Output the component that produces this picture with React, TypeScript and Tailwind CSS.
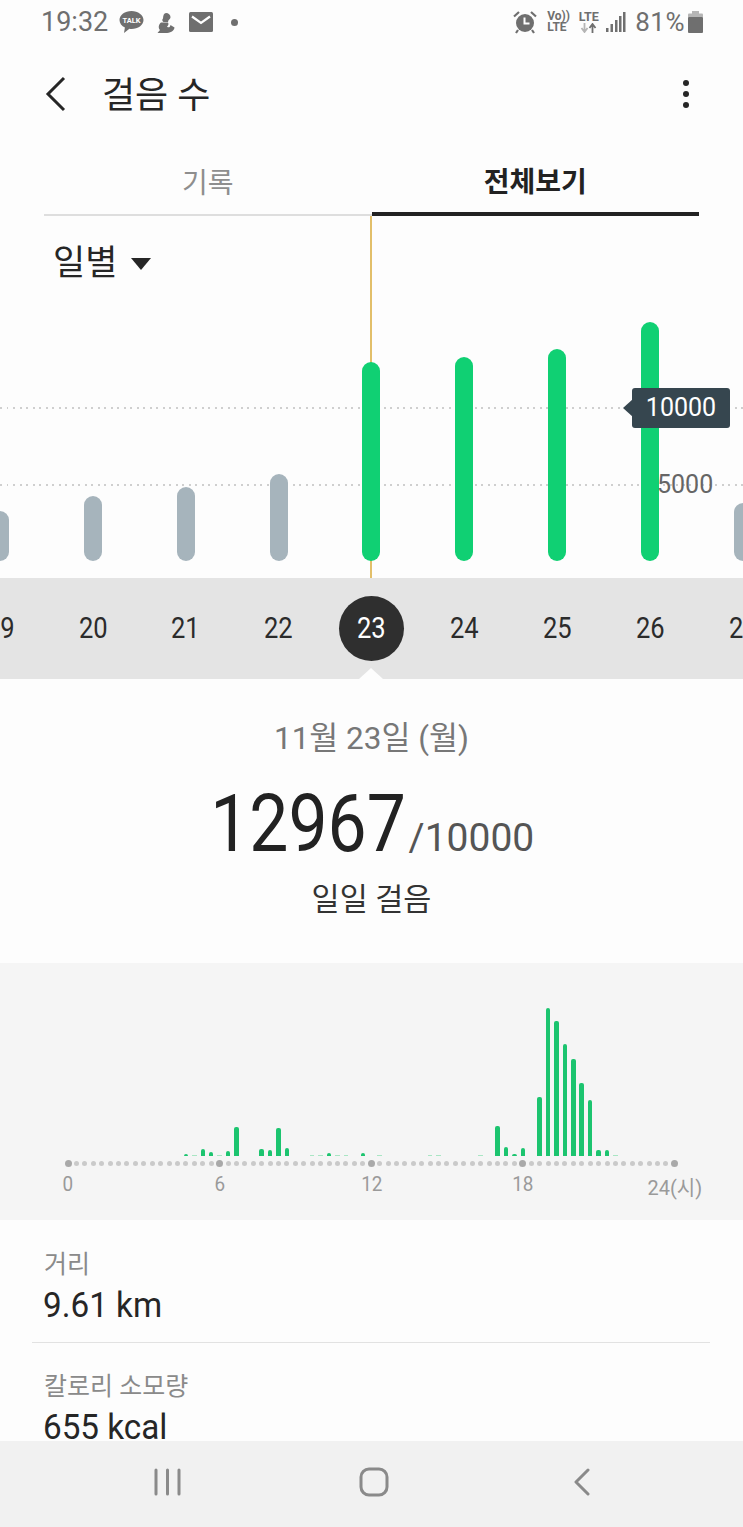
const days = [
  { label: "19", height: 50, active: false },
  { label: "20", height: 65, active: false },
  { label: "21", height: 74, active: false },
  { label: "22", height: 87, active: false },
  { label: "23", height: 199, active: true },
  { label: "24", height: 204, active: true },
  { label: "25", height: 212, active: true },
  { label: "26", height: 239, active: true },
  { label: "27", height: 58, active: false },
];

// bar height per 20 minute slot, 0.5 means a faint tick
const hourly: Record<number, number> = {
  14: 2, 15: 0.5, 16: 7, 17: 4, 18: 0.5, 19: 5, 20: 29, 23: 7, 24: 6, 25: 28, 26: 8,
  29: 0.5, 30: 0.5, 31: 3, 32: 0.5, 33: 0.5, 35: 3, 37: 0.5, 43: 0.5, 44: 0.5, 49: 0.5,
  51: 30, 52: 9, 53: 2, 54: 8, 56: 59, 57: 148, 58: 135, 59: 112, 60: 97, 61: 73, 62: 56,
  63: 6, 64: 6, 65: 0.5,
};
const slots = Array.from({ length: 73 }, (_, i) => i);

const font = "font-['Roboto','Noto_Sans_CJK_KR',sans-serif]";
const dotted = "bg-[repeating-linear-gradient(90deg,#cfcfcf_0_2px,transparent_2px_6.5px)]";

function StatusBar() {
  return (
    <div className="flex h-[44px] shrink-0 items-center pl-[41px] pr-[40px] text-[#6f6f6f]">
      <span className="text-[27px] leading-none">19:32</span>
      <svg className="ml-[11px]" width="25" height="24" viewBox="0 0 25 24">
        <path d="M12.500 1C6 1 .5 4.900.5 10c0 3.200 2.200 6 5.400 7.600L5 23l5.400-4.200c.7.100 1.400.200 2.100.200 6.500 0 12-4 12-9s-5.500-9-12-9z" fill="#6f6f6f" />
        <text x="12.500" y="13" textAnchor="middle" fontSize="7.500" fontWeight="700" fill="#fff" fontFamily="Roboto">TALK</text>
      </svg>
      <svg className="ml-[12px]" width="20" height="21" viewBox="0 0 20 21" fill="#6f6f6f">
        <path d="M10 1c2.500 0 4.500 1.800 4.500 4 0 1.400-.8 2.300-2 3.200L12 10H7.500C6 9 6 7.500 7 6.500 7.200 3.200 8 1 10 1z" />
        <path d="M5 10.500h7c1 1.800.3 3-1 4 1.500 1.500 3 1 3.500-1.500l4 2.500c-.6 4-4.500 5.500-9 5.500H1.500l2.500-3c-2-2-1.500-5.500 1-7.500z" />
      </svg>
      <svg className="ml-[13px]" width="24" height="20" viewBox="0 0 24 20">
        <rect width="24" height="20" rx="1.500" fill="#6f6f6f" />
        <path d="M3 4.500l9 6.500 9-6.500" stroke="#fff" strokeWidth="2.200" fill="none" />
      </svg>
      <span className="ml-[18px] size-[7px] rounded-full bg-[#6f6f6f]" />

      <svg className="ml-auto" width="24" height="24" viewBox="0 0 24 24" fill="#6f6f6f">
        <circle cx="12" cy="13" r="9" />
        <path d="M11.500 7.500v6h5" stroke="#fff" strokeWidth="2" fill="none" />
        <path d="M1 6.500L6 2M23 6.500L18 2M5 20l-2 3M19 20l2 3" stroke="#6f6f6f" strokeWidth="2.200" />
      </svg>
      <div className="ml-[10px] flex w-[23px] flex-col text-[12px] font-bold leading-[11px]">
        <span>Vo))</span>
        <span>LTE</span>
      </div>
      <div className="ml-[7px] flex w-[23px] flex-col items-center text-[12.500px] font-bold leading-[12px]">
        <span>LTE</span>
        <svg width="17" height="10" viewBox="0 0 17 10">
          <path d="M4.500 0v8M1.500 5l3 4 3-4" stroke="#b5b5b5" strokeWidth="1.800" fill="none" />
          <path d="M12.500 10V2M9.500 5l3-4 3 4" stroke="#6f6f6f" strokeWidth="1.800" fill="none" />
        </svg>
      </div>
      <svg className="ml-[6px]" width="20" height="22" viewBox="0 0 20 22" fill="#6f6f6f">
        <rect x="0" y="17" width="2.500" height="4" />
        <rect x="4.500" y="13" width="2.500" height="8" />
        <rect x="9" y="9" width="2.500" height="12" />
        <rect x="13" y="5" width="2.500" height="16" />
        <rect x="17" y="1" width="2.500" height="20" />
      </svg>
      <span className="ml-[9px] text-[26px] leading-none tracking-[0.5px]">81%</span>
      <svg className="ml-[3px]" width="15" height="22" viewBox="0 0 15 22">
        <path d="M4 0h7v3H4z" fill="#b5b5b5" />
        <rect y="2.500" width="15" height="4" rx="1" fill="#b5b5b5" />
        <rect y="6" width="15" height="16" rx="1" fill="#6f6f6f" />
      </svg>
    </div>
  );
}

function Header() {
  return (
    <div className="flex h-[100px] shrink-0 items-center pl-[45px] pr-[54px]">
      <svg width="22" height="36" viewBox="0 0 22 36" fill="none">
        <path d="M19 2L3 18l16 16" stroke="#262626" strokeWidth="3" />
      </svg>
      <h1 className="ml-[35px] mt-[3px] text-[36px] leading-none text-[#262626]">걸음 수</h1>
      <div className="ml-auto flex flex-col gap-[5px]">
        <span className="size-[6px] rounded-full bg-[#262626]" />
        <span className="size-[6px] rounded-full bg-[#262626]" />
        <span className="size-[6px] rounded-full bg-[#262626]" />
      </div>
    </div>
  );
}

function Tabs() {
  return (
    <div className="flex h-[72px] shrink-0 px-[44px] text-[28px] leading-none">
      <div className="flex flex-1 items-center justify-center border-b-2 border-[#dedede] pt-[10px] text-[#8e8e8e]">기록</div>
      <div className="flex flex-1 items-center justify-center border-b-4 border-[#222] pt-[10px] font-bold text-[#222]">전체보기</div>
    </div>
  );
}

function DailyChart() {
  return (
    <div className="relative flex h-[362px] shrink-0 flex-col overflow-hidden">
      <div className={`absolute inset-x-0 top-[191px] h-[2px] ${dotted}`} />
      <div className={`absolute inset-x-0 top-[268px] h-[2px] ${dotted}`} />
      <div className="absolute bottom-0 left-[370px] top-0 w-[2px] bg-[#e2bf6a]" />

      <div className="flex items-center pl-[53px] pt-[27px]">
        <span className="text-[35px] leading-[42px] text-[#262626]">일별</span>
        <span className="ml-[14px] h-0 w-0 border-x-[10px] border-t-[12px] border-x-transparent border-t-[#262626]" />
      </div>

      <div className="relative ml-[-46.500px] mt-auto flex items-end pb-[17px]">
        {days.map((d) => (
          <div key={d.label} className="flex w-[92.875px] shrink-0 justify-center">
            <div
              className={d.active ? "w-[18px] rounded-full bg-[#10d073]" : "w-[18px] rounded-full bg-[#a6b4bc]"}
              style={{ height: d.height }}
            />
          </div>
        ))}
      </div>

      <span className="absolute left-[657px] top-[254px] text-[25px] leading-[30px] text-[#666]">5000</span>
      <div className="absolute left-[632px] top-[172px] flex h-[40px] w-[98px] items-center justify-center rounded-[3px] bg-[#36464f] text-[25px] text-[#fff]">
        10000
        <span className="absolute left-[-9px] top-[11px] h-0 w-0 border-y-[9px] border-r-[10px] border-y-transparent border-r-[#36464f]" />
      </div>
    </div>
  );
}

function DateStrip() {
  return (
    <div className="relative ml-[-46.500px] flex h-[101px] w-[836px] shrink-0 items-center bg-[#e4e4e4]">
      {days.map((d) => (
        <div key={d.label} className="flex w-[92.875px] shrink-0 justify-center">
          {d.label === "23" ? (
            <span className="flex size-[65px] items-center justify-center rounded-full bg-[#2f2f2f] text-[#fff]">
              <span className="scale-x-[0.88] text-[29px]">23</span>
            </span>
          ) : (
            <span className="scale-x-[0.88] text-[29px] text-[#2b2b2b]">{d.label}</span>
          )}
        </div>
      ))}
      <span className="absolute bottom-0 left-[405.500px] h-0 w-0 border-x-[12px] border-b-[11px] border-x-transparent border-b-[#fdfdfd]" />
    </div>
  );
}

function Summary() {
  return (
    <div className="flex h-[284px] shrink-0 flex-col items-center">
      <p className="mt-[38px] text-[31.500px] leading-[44px] text-[#777]">11월 23일 (월)</p>
      <p className="mt-[24px] flex h-[78px] items-baseline leading-[78px] text-[#222]">
        <span className="ml-[-28px] origin-right scale-x-[0.87] text-[80px]">12967</span>
        <span className="ml-[3px] text-[39px] text-[#555]">/10000</span>
      </p>
      <p className="mt-[15px] text-[30.500px] leading-[44px] text-[#333]">일일 걸음</p>
    </div>
  );
}

function HourlyChart() {
  return (
    <div className="flex h-[257px] shrink-0 flex-col bg-[#f5f5f5]">
      <div className="mt-[40px] flex h-[153px] items-end pl-[63.800px]">
        {slots.map((i) => (
          <div key={i} className="flex w-[8.430px] shrink-0 justify-center">
            {hourly[i] && (
              <div
                className={hourly[i] < 1 ? "w-[4.500px] bg-[#a9e6c4]" : "w-[4.500px] rounded-t-[2px] bg-[#1cc46f]"}
                style={{ height: hourly[i] < 1 ? 1 : hourly[i] }}
              />
            )}
          </div>
        ))}
      </div>
      <div className="mt-[4px] flex h-[6px] items-center pl-[63.800px]">
        {slots.map((i) => (
          <div key={i} className="flex w-[8.430px] shrink-0 justify-center">
            <span className={i % 18 === 0 ? "size-[7px] shrink-0 rounded-full bg-[#a9a9a9]" : "size-[5px] shrink-0 rounded-full bg-[#cacaca]"} />
          </div>
        ))}
      </div>
      <div className="ml-[-8px] mt-[5px] flex text-[21px] leading-[26px] text-[#9a9a9a]">
        {["0", "6", "12", "18"].map((t) => (
          <span key={t} className="w-[151.750px] shrink-0 scale-x-[0.9] text-center">{t}</span>
        ))}
        <span className="mt-[4px] w-[151.750px] shrink-0 scale-x-[0.95] text-center">24(시)</span>
      </div>
    </div>
  );
}

function Stats() {
  return (
    <div className="min-h-0 flex-1 overflow-hidden pl-[32px] pr-[33px]">
      <div className="h-[123px] border-b border-[#e2e2e2] px-[12px] pt-[28px]">
        <p className="text-[25px] leading-[34px] text-[#8a8a8a]">거리</p>
        <p className="ml-[-1px] mt-[5px] origin-left scale-x-[0.95] text-[35px] leading-[38px] text-[#262626]">9.61 km</p>
      </div>
      <div className="px-[12px] pt-[27px]">
        <p className="text-[25px] leading-[34px] text-[#8a8a8a]">칼로리 소모량</p>
        <p className="ml-[-1px] mt-[5px] origin-left scale-x-[0.95] text-[35px] leading-[38px] text-[#262626]">655 kcal</p>
      </div>
    </div>
  );
}

function NavBar() {
  return (
    <div className="flex h-[86px] shrink-0 items-center bg-[#f1f1f1] pb-[4px] pl-[154px]">
      <svg width="27" height="28" viewBox="0 0 27 28" stroke="#8a8a8a" strokeWidth="3" strokeLinecap="round">
        <path d="M2 2v24M13.500 2v24M25 2v24" />
      </svg>
      <svg className="ml-[178px]" width="30" height="30" viewBox="0 0 30 30" fill="none">
        <rect x="2" y="2" width="26" height="26" rx="8" stroke="#8a8a8a" strokeWidth="3" />
      </svg>
      <svg className="ml-[184px]" width="18" height="28" viewBox="0 0 18 28" fill="none" stroke="#8a8a8a" strokeWidth="3" strokeLinecap="round" strokeLinejoin="round">
        <path d="M15 2L3 14l12 12" />
      </svg>
    </div>
  );
}

export default function App() {
  return (
    <div className={`flex h-[1527px] w-[743px] flex-col overflow-hidden bg-[#fdfdfd] ${font}`}>
      <StatusBar />
      <Header />
      <Tabs />
      <DailyChart />
      <DateStrip />
      <Summary />
      <HourlyChart />
      <Stats />
      <NavBar />
    </div>
  );
}
